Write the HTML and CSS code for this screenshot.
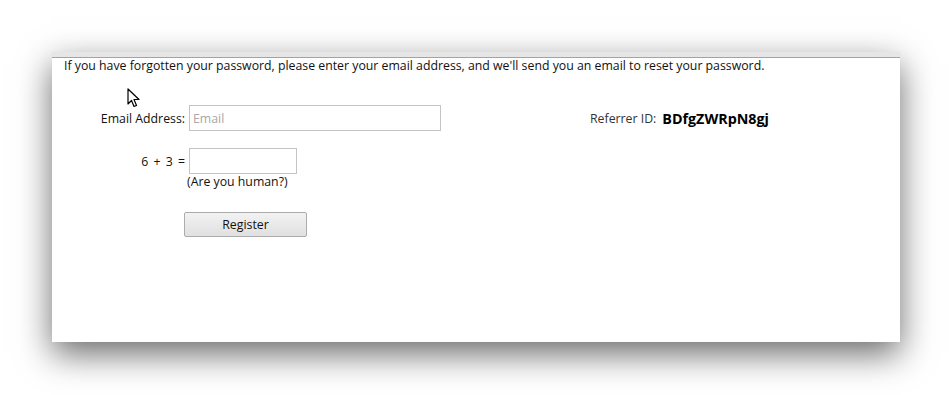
FILE: index.html
```html
<!DOCTYPE html>
<html lang="en">
  <head>
    <meta charset="UTF-8" />
    <meta name="viewport" content="width=device-width, initial-scale=1.0" />
    <title>Forgot Password</title>
    <link rel="stylesheet" href="styles.css">
  </head>
  <body>
    <div class="panel">
      <p class="intro">
        If you have forgotten your password, please enter your email address, and we'll send you an email to reset your password.
      </p>

      <svg class="cursor" width="13" height="20" viewBox="0 0 13 20">
        <path d="M1 1 L1 16 L4.5 12.5 L7 18.5 L9.5 17.5 L7 11.5 L12 11.5 Z" fill="#fff" stroke="#000" stroke-width="1.2" stroke-linejoin="round" />
      </svg>

      <form class="reset-form">
        <div class="form-row">
          <label class="field-label" for="email">Email Address:</label>
          <input class="text-input email-input" type="text" id="email" placeholder="Email" />
          <div class="referrer">
            <span class="referrer-label">Referrer ID:</span>
            <span class="referrer-id">BDfgZWRpN8gj</span>
          </div>
        </div>

        <div class="form-row captcha-row">
          <label class="field-label sum-label" for="captcha">6 + 3 =</label>
          <input class="text-input captcha-input" type="text" id="captcha" />
        </div>
        <div class="hint">(Are you human?)</div>

        <div class="button-container">
          <button type="button" class="register-button">Register</button>
        </div>
      </form>
    </div>
  </body>
</html>
```

FILE: styles.css
```css
html,
body {
  min-height: 395px;
}

body {
  margin: 0;
  padding: 52px 0 0 52px;
  box-sizing: border-box;
  background-color: #fff;
  font-family: "Open Sans", "Noto Sans", sans-serif;
  font-size: 12.3px;
  color: #111;
}

.panel {
  position: relative;
  width: 848px;
  height: 285px;
  background-color: #fff;
  border-top: 5px solid #e6e6e6;
  box-shadow: 0 12px 32px rgba(0, 0, 0, 0.58);
}

.panel::before {
  content: "";
  display: block;
  height: 1px;
  background-color: #a3a3a3;
}

.intro {
  margin: 0;
  padding-left: 12px;
  line-height: 16px;
}

.cursor {
  position: absolute;
  left: 75px;
  top: 31px;
}

.reset-form {
  margin-top: 31px;
}

.form-row {
  display: flex;
  align-items: center;
}

.field-label {
  width: 137px;
  padding-right: 4px;
  text-align: right;
  box-sizing: border-box;
}

.sum-label {
  word-spacing: 2px;
}

.text-input {
  height: 26px;
  box-sizing: border-box;
  border: 1px solid #c4c4c4;
  padding: 0 3px;
  font-family: inherit;
  font-size: 12.3px;
  color: #111;
  outline: none;
}

.text-input::placeholder {
  color: #a8a8a8;
}

.email-input {
  width: 252px;
}

.captcha-input {
  width: 108px;
}

.referrer {
  margin-left: 149px;
  display: flex;
  align-items: center;
}

.referrer-label {
  color: #333;
  margin-right: 6px;
}

.referrer-id {
  font-size: 14.3px;
  font-weight: bold;
  color: #000;
}

.captcha-row {
  margin-top: 17px;
}

.hint {
  padding-left: 135px;
  line-height: 16px;
}

.button-container {
  margin-top: 22px;
  padding-left: 132px;
}

.register-button {
  width: 123px;
  height: 25px;
  border: 1px solid #acacac;
  border-radius: 2px;
  background: linear-gradient(#f2f2f2, #e0e0e0);
  font-family: inherit;
  font-size: 12.3px;
  color: #111;
  cursor: pointer;
}
```
